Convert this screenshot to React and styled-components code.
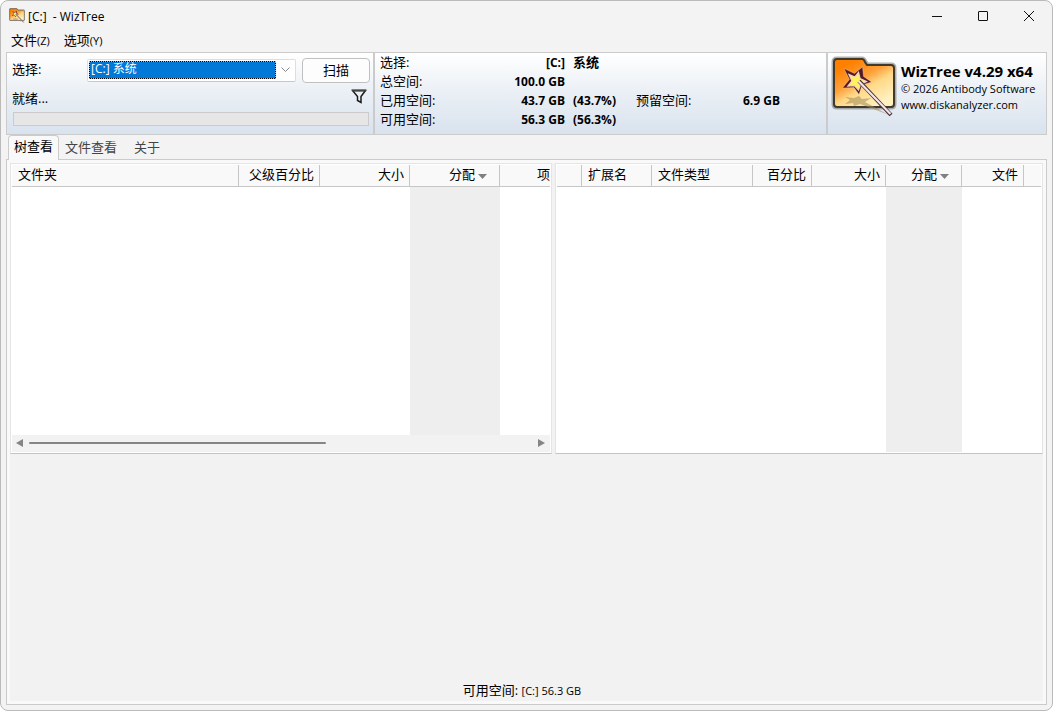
import React, { useState } from 'react';
import styled, { createGlobalStyle, css } from 'styled-components';

const line = '#cbcbcb';

const folderColumns = [
    { name: '文件夹', width: 227 },
    { name: '父级百分比', width: 81, right: true },
    { name: '大小', width: 90, right: true },
    { name: '分配', width: 90, right: true, sorted: true },
    { name: '项', right: true, last: true },
];

const typeColumns = [
    { name: '', width: 25 },
    { name: '扩展名', width: 70 },
    { name: '文件类型', width: 101 },
    { name: '百分比', width: 59, right: true },
    { name: '大小', width: 74, right: true },
    { name: '分配', width: 76, right: true, sorted: true },
    { name: '文件', width: 62, right: true },
    { name: '', last: true },
];

const tabs = ['树查看', '文件查看', '关于'];

const GlobalStyle = createGlobalStyle`
    * {
        box-sizing: border-box;
    }
    body {
        margin: 0;
        background: #fff;
        color: #000;
        font-family: "Open Sans", "Noto Sans CJK SC", sans-serif;
        font-size: 13px;
        line-height: 19px;
    }
    button, select {
        margin: 0;
        padding: 0;
        border: none;
        background: none;
        color: inherit;
        font: inherit;
    }
`;

const Window = styled.div`
    display: flex;
    flex-direction: column;
    min-height: 100vh;
    padding: 0 5px 5px;
    background: #f3f3f3;
    border: 1px solid #bababa;
    border-radius: 8px;
`;

const Latin = styled.span`
    font-size: 11px;
`;

const TitleBar = styled.header`
    display: flex;
    align-items: center;
    height: 30px;
    margin-right: -5px;
    padding-left: 3px;
`;

const Title = styled.h1`
    flex: 1;
    margin: 0 0 0 3px;
    font-size: 12px;
    font-weight: 400;
    white-space: pre;
`;

const WindowButton = styled.button`
    display: flex;
    align-items: center;
    justify-content: center;
    width: 46px;
    height: 30px;
`;

const MenuBar = styled.nav`
    display: flex;
    align-items: flex-start;
    gap: 14px;
    height: 21px;
    padding-left: 5px;
`;

const TopBar = styled.section`
    display: flex;
    height: 83px;
    border: 1px solid ${line};
    background: linear-gradient(#fff, #eaeff5 50%, #d9e3ee);
`;

const DrivePanel = styled.div`
    display: flex;
    flex-direction: column;
    width: 368px;
    padding: 5px 3px 8px 5px;
    border-right: 2px solid ${line};
`;

const DriveRow = styled.div`
    display: flex;
    align-items: center;
    height: 25px;
`;

const DriveLabel = styled.label`
    width: 75px;
    padding-bottom: 2px;
`;

const Combo = styled.div`
    display: flex;
    align-items: center;
    flex: 1;
    height: 23px;
    margin-right: 6px;
    padding: 1px 1px 2px;
    background: #fff;
    border: 1px solid #dedede;
    border-bottom-color: #c8c8c8;
    border-radius: 2px;

    svg {
        margin: 0 auto;
    }
`;

const DriveSelect = styled.select`
    width: 187px;
    height: 18px;
    padding: 0 0 2px 1px;
    appearance: none;
    color: #fff;
    font-size: 12px;
    line-height: 14px;
    border: 1px dotted #ff9a4a;
    border-radius: 0;
    background: linear-gradient(#0078d7, #0078d7) padding-box, linear-gradient(#000, #000) border-box;
    outline: none;
`;

const ScanButton = styled.button`
    width: 68px;
    height: 25px;
    padding-bottom: 1px;
    background: #fdfdfd;
    border: 1px solid #c0c0c0;
    border-radius: 4px;
`;

const StatusRow = styled.div`
    display: flex;
    justify-content: space-between;
    align-items: center;
    flex: 1;
    padding: 2px 3px 0 0;
`;

const FilterButton = styled.button`
    display: flex;
    padding-bottom: 5px;
`;

const Progress = styled.div`
    height: 14px;
    margin: 0 1px;
    background: #e6e6e6;
    border: 1px solid ${line};
`;

const InfoPanel = styled.div`
    display: grid;
    grid-template-columns: 80px 105px 71px 60px 84px;
    grid-auto-rows: 19px;
    align-content: start;
    flex: 1;
    padding: 0 5px;
    border-right: 2px solid ${line};
`;

const InfoValue = styled.strong`
    padding-left: ${p => (p.$note ? '8px' : '0')};
    font-size: ${p => (p.$cjk ? '13px' : '12px')};
    text-align: ${p => (p.$note ? 'left' : 'right')};
`;

const Brand = styled.div`
    display: flex;
    width: 218px;
    padding: 3px 0 0 3px;
    font-size: 11px;
    line-height: 16px;
    white-space: nowrap;

    > div {
        padding: 6px 0 0 4px;
    }
    a {
        color: inherit;
        text-decoration: none;
    }
`;

const BrandName = styled.h2`
    margin: 0 0 1px;
    font-size: 15px;
    line-height: 18px;
    font-weight: 700;
`;

const TabList = styled.div`
    display: flex;
    height: 25px;
    padding-left: 2px;
`;

const Tab = styled.button`
    height: 24px;
    padding: 0 11px 0 6px;
    color: #444;
    white-space: nowrap;

    ${p => p.$active && css`
        height: 25px;
        padding: 0 5px 4px;
        z-index: 1;
        color: #000;
        background: #f9f9f9;
        border: 1px solid ${line};
        border-bottom: none;
        border-radius: 4px 4px 0 0;
    `}
`;

const Page = styled.main`
    display: flex;
    flex: 1;
    margin-top: -1px;
    padding: 3px;
    background: #f9f9f9;
    border: 1px solid ${line};
`;

const PageBody = styled.div`
    display: flex;
    flex-direction: column;
    flex: 1;
    min-width: 0;
    background: #f2f2f2;
`;

const Panes = styled.div`
    display: grid;
    grid-template-columns: minmax(0, 542fr) minmax(0, 488fr);
    gap: 3px;
    height: 291px;
`;

const Pane = styled.div`
    display: flex;
    flex-direction: column;
    padding: 1px;
    background: #fff;
    border: 1px solid #e5e5e5;
    border-bottom-color: #c4c4c4;
`;

const List = styled.table`
    flex: 1;
    width: 100%;
    height: 100%;
    table-layout: fixed;
    border-collapse: separate;
    border-spacing: 0;
`;

const HeadCell = styled.th`
    height: 22px;
    padding: 0 5px 2px 6px;
    background: #f9f9f9;
    border-right: 1px solid #c6c6c6;
    border-bottom: 1px solid #c6c6c6;
    font-weight: 400;
    text-align: ${p => (p.$right ? 'right' : 'left')};
    white-space: nowrap;

    ${p => p.$sorted && css`
        padding-right: 12px;
    `}
    ${p => p.$last && css`
        padding-right: 0;
        border-right: none;
    `}

    svg {
        margin-left: 3px;
    }
`;

const BodyCell = styled.td`
    padding: 0;
    background: ${p => (p.$sorted ? '#eee' : '#fff')};
`;

const ScrollBar = styled.div`
    display: flex;
    align-items: center;
    justify-content: space-between;
    height: 17px;
    padding: 0 5px 1px 4px;
    background: #f2f2f2;
`;

const ScrollTrack = styled.div`
    flex: 1;
    margin: 0 6px;
`;

const ScrollThumb = styled.div`
    width: 59%;
    height: 2px;
    background: #858585;
    border-radius: 1px;
`;

const FreeSpace = styled.footer`
    display: flex;
    flex: 1;
    align-items: flex-end;
    justify-content: center;
    padding: 0 9px 1px 0;
`;

function WizIcon({ size, id }) {
    return (
        <svg width={size} height={size} viewBox="0 0 66 66" aria-hidden="true">
            <defs>
                <linearGradient id={id} x1="0.1" y1="0.2" x2="0.65" y2="1">
                    <stop offset="0" stopColor="#ff8000" />
                    <stop offset="0.38" stopColor="#ffa23c" />
                    <stop offset="0.6" stopColor="#ffd987" />
                    <stop offset="1" stopColor="#fff0c0" />
                </linearGradient>
            </defs>
            <path d="M6 3h25q2 0 3 3l2 3h24q3 0 3 3v36q0 3-3 3H6q-3 0-3-3V6q0-3 3-3z" fill="none" stroke="#555" strokeOpacity="0.45" strokeWidth="5" />
            <path d="M6 3h25q2 0 3 3l2 3h24q3 0 3 3v36q0 3-3 3H6q-3 0-3-3V6q0-3 3-3z" fill={`url(#${id})`} stroke="#40392c" strokeWidth="2" />
            <path d="M14 41l9 1 5-2 3 3 9-1-6 4 24 13-29-11-6 2-1-3-8 1 5-4z" fill="#a18a57" opacity="0.55" />
            <path d="M31.500 11l1 9.500 8 5.500-9.500 3-3 9.500-5-7-11.500.500 7-8.500-5.500-11 10.500 5z" fill="#551b20" stroke="#fff" strokeOpacity="0.4" strokeWidth="0.700" />
            <path d="M27.500 16.500l1.500 6 6.500 3-6 3-2 5.500-4-4.500-6.500.500 4-5-3-6.500 6 2.500z" fill="#fff25a" stroke="#f5d3c6" strokeWidth="1.300" />
            <path d="M28 25L60 59" stroke="#41272b" strokeWidth="4" />
            <path d="M27.500 25L59.500 58" stroke="#f4e4ea" strokeWidth="2.300" />
        </svg>
    );
}

function FileList({ columns }) {
    return (
        <List>
            <colgroup>
                {columns.map((c, i) => <col key={i} width={c.width} />)}
            </colgroup>
            <thead>
                <tr>
                    {columns.map((c, i) => (
                        <HeadCell key={i} $right={c.right} $sorted={c.sorted} $last={c.last}>
                            {c.name}
                            {c.sorted && (
                                <svg width="9" height="5" viewBox="0 0 9 5"><path d="M0 0h9L4.500 5z" fill="#808080" /></svg>
                            )}
                        </HeadCell>
                    ))}
                </tr>
            </thead>
            <tbody>
                <tr>
                    {columns.map((c, i) => <BodyCell key={i} $sorted={c.sorted} />)}
                </tr>
            </tbody>
        </List>
    );
}

export default function App() {
    const [tab, setTab] = useState(0);

    return (
        <Window>
            <GlobalStyle />
            <TitleBar>
                <WizIcon size={16} id="small" />
                <Title>{'[C:]  - WizTree'}</Title>
                <WindowButton aria-label="最小化">
                    <svg width="10" height="10" viewBox="0 0 10 10"><path d="M0 5.500h10" stroke="#111" /></svg>
                </WindowButton>
                <WindowButton aria-label="最大化">
                    <svg width="10" height="10" viewBox="0 0 10 10"><rect x="0.500" y="0.500" width="9" height="9" rx="0.500" fill="none" stroke="#111" /></svg>
                </WindowButton>
                <WindowButton aria-label="关闭">
                    <svg width="10" height="10" viewBox="0 0 10 10"><path d="M0 0l10 10M10 0L0 10" stroke="#111" /></svg>
                </WindowButton>
            </TitleBar>

            <MenuBar>
                <button>文件<Latin>(Z)</Latin></button>
                <button>选项<Latin>(Y)</Latin></button>
            </MenuBar>

            <TopBar>
                <DrivePanel>
                    <DriveRow>
                        <DriveLabel htmlFor="drive">选择:</DriveLabel>
                        <Combo>
                            <DriveSelect id="drive">
                                <option>[C:] 系统</option>
                            </DriveSelect>
                            <svg width="9" height="6" viewBox="0 0 9 6"><path d="M0.500 0.500l4 4 4-4" fill="none" stroke="#868686" /></svg>
                        </Combo>
                        <ScanButton>扫描</ScanButton>
                    </DriveRow>
                    <StatusRow>
                        <span>就绪...</span>
                        <FilterButton aria-label="过滤">
                            <svg width="16" height="15" viewBox="0 0 16 15">
                                <path d="M1.500 1.500h13L10 7.500v6l-3.500-2V7.500z" fill="none" stroke="#1a1a1a" strokeWidth="1.500" />
                                <path d="M1 1.500h14" stroke="#444" strokeWidth="2" />
                            </svg>
                        </FilterButton>
                    </StatusRow>
                    <Progress role="progressbar" aria-label="进度" />
                </DrivePanel>

                <InfoPanel>
                    <span>选择:</span>
                    <InfoValue>[C:]</InfoValue>
                    <InfoValue $note $cjk>系统</InfoValue>
                    <span />
                    <span />
                    <span>总空间:</span>
                    <InfoValue>100.0 GB</InfoValue>
                    <span />
                    <span />
                    <span />
                    <span>已用空间:</span>
                    <InfoValue>43.7 GB</InfoValue>
                    <InfoValue $note>(43.7%)</InfoValue>
                    <span>预留空间:</span>
                    <InfoValue>6.9 GB</InfoValue>
                    <span>可用空间:</span>
                    <InfoValue>56.3 GB</InfoValue>
                    <InfoValue $note>(56.3%)</InfoValue>
                </InfoPanel>

                <Brand>
                    <WizIcon size={66} id="large" />
                    <div>
                        <BrandName>WizTree v4.29 x64</BrandName>
                        © 2026 Antibody Software<br />
                        <a href="#home">www.diskanalyzer.com</a>
                    </div>
                </Brand>
            </TopBar>

            <TabList role="tablist">
                {tabs.map((name, i) => (
                    <Tab key={name} role="tab" aria-selected={i === tab} $active={i === tab} onClick={() => setTab(i)}>{name}</Tab>
                ))}
            </TabList>

            <Page>
                <PageBody>
                    <Panes>
                        <Pane>
                            <FileList columns={folderColumns} />
                            <ScrollBar>
                                <svg width="7" height="8" viewBox="0 0 7 8"><path d="M7 0v8L0 4z" fill="#858585" /></svg>
                                <ScrollTrack><ScrollThumb /></ScrollTrack>
                                <svg width="7" height="8" viewBox="0 0 7 8"><path d="M0 0v8l7-4z" fill="#858585" /></svg>
                            </ScrollBar>
                        </Pane>
                        <Pane>
                            <FileList columns={typeColumns} />
                        </Pane>
                    </Panes>
                    <FreeSpace>
                        <span>可用空间: <Latin>[C:] 56.3 GB</Latin></span>
                    </FreeSpace>
                </PageBody>
            </Page>
        </Window>
    );
}
